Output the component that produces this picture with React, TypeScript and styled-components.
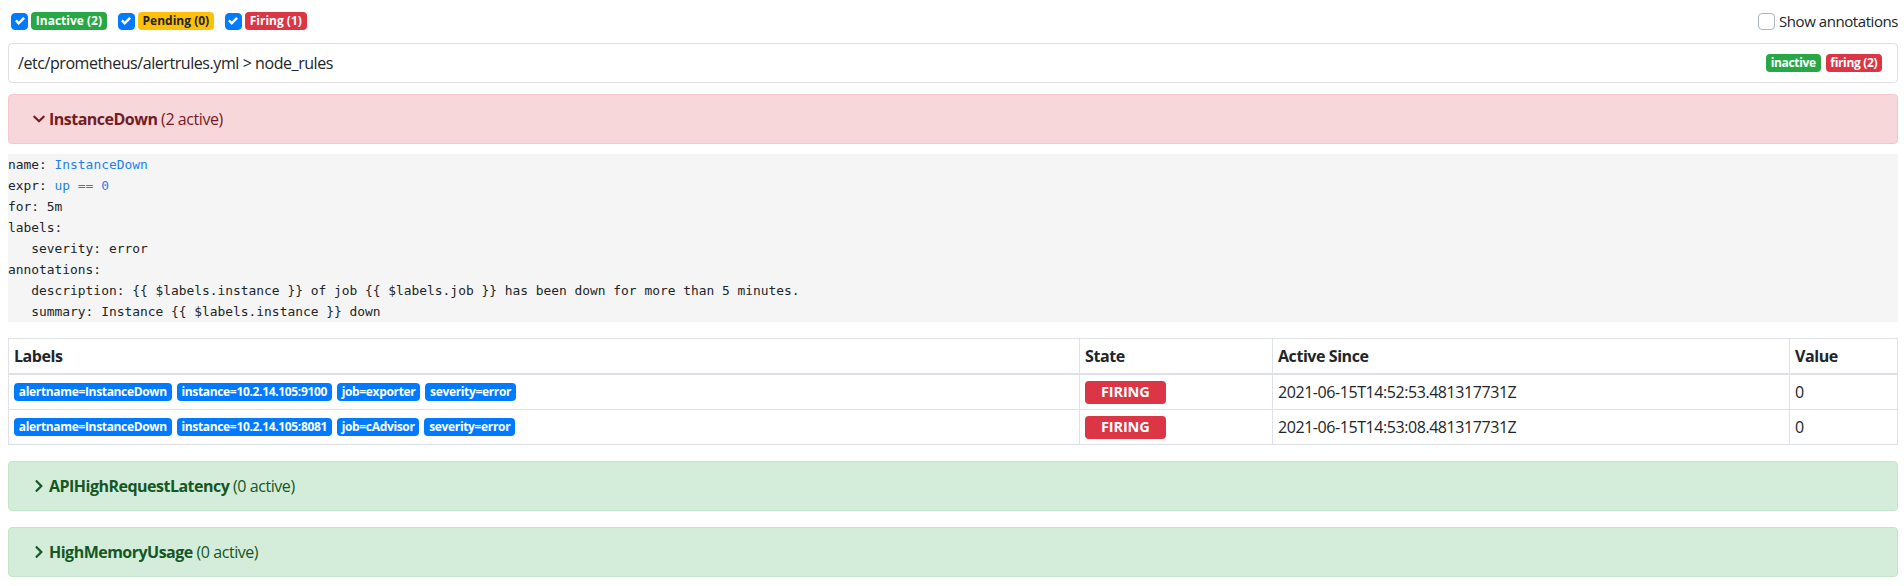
import React from "react"
import styled, { createGlobalStyle } from 'styled-components'
import { FaChevronDown, FaChevronRight } from 'react-icons/fa'

const GlobalStyle = createGlobalStyle`
body {
    margin: 0;
    background: #fff;
    color: #212529;
    font-family: "Open Sans", "Noto Sans", sans-serif;
    font-size: 16px;
    letter-spacing: -0.027em;
}
* { box-sizing: border-box; }
`

type Tone = 'success' | 'warning' | 'danger' | 'primary'

const toneBg: Record<Tone, string> = {
    success: '#28a745',
    warning: '#ffc107',
    danger: '#dc3545',
    primary: '#007bff',
}

const Page = styled.div`
    padding: 12px 6px 0 8px;
`

const FilterBar = styled.div`
    display: flex;
    justify-content: space-between;
    align-items: center;
    height: 18px;
    padding-left: 3px;
`

const FilterGroup = styled.div`
    display: flex;
    align-items: center;
    gap: 11px;
`

const Filter = styled.label`
    display: flex;
    align-items: center;
    gap: 3px;
`

const Box = styled.span<{ $checked?: boolean }>`
    width: 17px;
    height: 17px;
    border-radius: 4px;
    display: inline-flex;
    align-items: center;
    justify-content: center;
    background: ${p => p.$checked ? '#007bff' : '#fff'};
    border: 1px solid ${p => p.$checked ? '#007bff' : '#adb5bd'};
`

const Badge = styled.span<{ $tone: Tone; $tight?: boolean }>`
    display: inline-block;
    font-size: 12px;
    font-weight: 700;
    line-height: 1;
    padding: 3px 4.8px;
    border-radius: 4px;
    white-space: nowrap;
    letter-spacing: ${p => p.$tight ? '-0.028em' : '0'};
    background: ${p => toneBg[p.$tone]};
    color: ${p => p.$tone === 'warning' ? '#212529' : '#fff'};
`

const StateBadge = styled(Badge)`
    font-size: 14.5px;
    padding: 4px 16px;
    letter-spacing: -0.01em;
    text-transform: uppercase;
`

const Toggle = styled.label`
    display: flex;
    align-items: center;
    gap: 4px;
    font-size: 15px;
`

const FilePanel = styled.div`
    margin-top: 13px;
    height: 40px;
    border: 1px solid rgba(0, 0, 0, 0.125);
    border-radius: 4px;
    display: flex;
    align-items: center;
    justify-content: space-between;
    padding: 0 15px 0 9px;
`

const PanelBadges = styled.div`
    display: flex;
    gap: 5px;
`

const Rule = styled.section`
    margin-top: 11px;
    & + & { margin-top: 16px; }
`

const RuleHeader = styled.div<{ $firing?: boolean }>`
    height: 50px;
    display: flex;
    align-items: center;
    gap: 4px;
    padding: 0 24px;
    border-radius: 4px;
    border: 1px solid ${p => p.$firing ? '#f5c6cb' : '#c3e6cb'};
    background: ${p => p.$firing ? '#f8d7da' : '#d4edda'};
    color: ${p => p.$firing ? '#721c24' : '#155724'};
    cursor: pointer;
`

const Chevron = styled.span`
    width: 12px;
    display: inline-flex;
    justify-content: center;
`

const RuleName = styled.strong`
    font-weight: 700;
    letter-spacing: -0.032em;
`

const Code = styled.pre`
    margin: 10px 0 0;
    background: #f5f5f5;
    font-family: "DejaVu Sans Mono", monospace;
    font-size: 12.9px;
    line-height: 21px;
    letter-spacing: 0;
    color: #212529;
    white-space: pre;
`

const Val = styled.span`
    color: #1c7ff0;
`

const Table = styled.table`
    margin-top: 16px;
    width: 100%;
    border-collapse: collapse;
    table-layout: fixed;
    th, td {
        border: 1px solid #dee2e6;
        padding: 4.8px 5px;
        line-height: 24px;
        text-align: left;
        vertical-align: middle;
    }
    th {
        font-weight: 700;
        border-bottom-width: 2px;
    }
`

const Labels = styled.div`
    display: flex;
    align-items: center;
    gap: 5px;
    height: 24px;
`

const Check = () => (
    <svg width="10" height="10" viewBox="0 0 8 8">
        <path fill="#fff" d="M6.564.75l-3.59 3.612-1.538-1.55L0 4.26l2.974 2.99L8 2.193z" />
    </svg>
)

const alerts = [
    { instance: '10.2.14.105:9100', job: 'exporter', since: '2021-06-15T14:52:53.481317731Z' },
    { instance: '10.2.14.105:8081', job: 'cAdvisor', since: '2021-06-15T14:53:08.481317731Z' },
]

const App: React.FC = () => (
    <Page>
        <GlobalStyle />
        <FilterBar>
            <FilterGroup>
                <Filter><Box $checked><Check /></Box><Badge $tone="success">Inactive (2)</Badge></Filter>
                <Filter><Box $checked><Check /></Box><Badge $tone="warning">Pending (0)</Badge></Filter>
                <Filter><Box $checked><Check /></Box><Badge $tone="danger">Firing (1)</Badge></Filter>
            </FilterGroup>
            <Toggle><Box />Show annotations</Toggle>
        </FilterBar>

        <FilePanel>
            <span>/etc/prometheus/alertrules.yml &gt; node_rules</span>
            <PanelBadges>
                <Badge $tone="success" $tight>inactive</Badge>
                <Badge $tone="danger" $tight>firing (2)</Badge>
            </PanelBadges>
        </FilePanel>

        <Rule>
            <RuleHeader $firing>
                <Chevron><FaChevronDown size={14} /></Chevron>
                <span><RuleName>InstanceDown</RuleName> (2 active)</span>
            </RuleHeader>
            <Code>
{`name: `}<Val>InstanceDown</Val>{`
expr: `}<Val>up == 0</Val>{`
for: 5m
labels:
   severity: error
annotations:
   description: {{ $labels.instance }} of job {{ $labels.job }} has been down for more than 5 minutes.
   summary: Instance {{ $labels.instance }} down`}
            </Code>
            <Table>
                <thead>
                    <tr>
                        <th>Labels</th>
                        <th style={{ width: 193 }}>State</th>
                        <th style={{ width: 517 }}>Active Since</th>
                        <th style={{ width: 108 }}>Value</th>
                    </tr>
                </thead>
                <tbody>
                    {alerts.map(a => (
                        <tr key={a.instance}>
                            <td>
                                <Labels>
                                    <Badge $tone="primary" $tight>alertname=InstanceDown</Badge>
                                    <Badge $tone="primary" $tight>instance={a.instance}</Badge>
                                    <Badge $tone="primary" $tight>job={a.job}</Badge>
                                    <Badge $tone="primary" $tight>severity=error</Badge>
                                </Labels>
                            </td>
                            <td><StateBadge $tone="danger">firing</StateBadge></td>
                            <td>{a.since}</td>
                            <td>0</td>
                        </tr>
                    ))}
                </tbody>
            </Table>
        </Rule>

        <Rule>
            <RuleHeader>
                <Chevron><FaChevronRight size={14} /></Chevron>
                <span><RuleName>APIHighRequestLatency</RuleName> (0 active)</span>
            </RuleHeader>
        </Rule>

        <Rule>
            <RuleHeader>
                <Chevron><FaChevronRight size={14} /></Chevron>
                <span><RuleName>HighMemoryUsage</RuleName> (0 active)</span>
            </RuleHeader>
        </Rule>
    </Page>
)

export default App
